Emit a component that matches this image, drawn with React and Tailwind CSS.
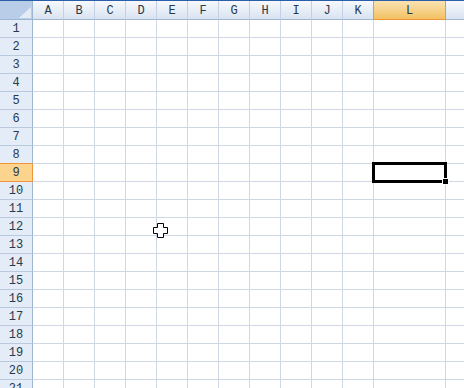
import React from 'react';

const COLS = [
  { name: 'A', w: 'w-[31px]' },
  { name: 'B', w: 'w-[31px]' },
  { name: 'C', w: 'w-[31px]' },
  { name: 'D', w: 'w-[31px]' },
  { name: 'E', w: 'w-[31px]' },
  { name: 'F', w: 'w-[31px]' },
  { name: 'G', w: 'w-[31px]' },
  { name: 'H', w: 'w-[31px]' },
  { name: 'I', w: 'w-[31px]' },
  { name: 'J', w: 'w-[31px]' },
  { name: 'K', w: 'w-[31px]' },
  { name: 'L', w: 'w-[72px]' },
  { name: 'M', w: 'w-[72px]' },
];

const ACTIVE_COL = 11;
const ACTIVE_ROW = 9;
const ROWS = Array.from({ length: 21 }, (_, i) => i + 1);

const Corner = () => (
  <div className="w-[33px] h-full shrink-0 border-r border-b border-[#9eb6ce] bg-[#b9cde9] relative">
    <svg className="absolute left-[19px] top-[6px]" width="12" height="11" viewBox="0 0 12 11">
      <path d="M12 0 L12 11 L0 11 Z" fill="#e3ebf6" />
    </svg>
  </div>
);

const ColHeader = ({ col, i }) => {
  const active = i === ACTIVE_COL;
  const beforeActive = i === ACTIVE_COL - 1;
  return (
    <div
      className={`${col.w} h-full shrink-0 flex items-center justify-center border-r border-b pt-[2px] ${
        active
          ? 'bg-gradient-to-b from-[#fae3b2] to-[#f2c161] border-[#f29536]'
          : beforeActive
          ? 'bg-gradient-to-b from-[#f6f9fd] to-[#d9e3f1] border-b-[#9eb6ce] border-r-[#f29536]'
          : 'bg-gradient-to-b from-[#f6f9fd] to-[#d9e3f1] border-b-[#9eb6ce] border-r-[#c3d1e3]'
      }`}
    >
      {col.name}
    </div>
  );
};

const RowHeader = ({ n }) => {
  const active = n === ACTIVE_ROW;
  const beforeActive = n === ACTIVE_ROW - 1;
  return (
    <div
      className={`w-[33px] h-full shrink-0 flex items-center justify-center border-r border-b pt-[1px] ${
        active
          ? 'bg-[#fcd48e] border-[#f29536]'
          : beforeActive
          ? 'bg-[#e4ecf7] border-r-[#9eb6ce] border-b-[#f29536]'
          : 'bg-[#e4ecf7] border-r-[#9eb6ce] border-b-[#b9c9de]'
      }`}
    >
      {n}
    </div>
  );
};

const Cell = ({ col, selected }) => (
  <div className={`${col.w} h-full shrink-0 border-r border-b border-[#d0d7e5] relative`}>
    {selected && (
      <>
        <div className="absolute left-[-2px] top-[-2px] w-[75px] h-[21px] border-[3px] border-black z-10" />
        <div className="absolute left-[68px] top-[14px] w-[7px] h-[7px] bg-white z-20 flex items-center justify-center">
          <div className="w-[5px] h-[5px] bg-black" />
        </div>
      </>
    )}
  </div>
);

const App = () => {
  return (
    <div className="w-[464px] h-[388px] overflow-hidden relative bg-white font-['Liberation_Mono',monospace] text-[12px] text-[#27394b]">
      <div className="h-[1px] bg-[#2a5ea8]" />
      <div className="flex h-[19px]">
        <Corner />
        {COLS.map((c, i) => (
          <ColHeader key={c.name} col={c} i={i} />
        ))}
      </div>
      {ROWS.map((n) => (
        <div key={n} className="flex h-[18px]">
          <RowHeader n={n} />
          {COLS.map((c, i) => (
            <Cell key={c.name} col={c} selected={n === ACTIVE_ROW && i === ACTIVE_COL} />
          ))}
        </div>
      ))}
      {/* cell cursor */}
      <svg className="absolute left-[153px] top-[223px] z-30" width="15" height="15" viewBox="0 0 15 15">
        <path d="M4.5 0.5h6v4h4v6h-4v4h-6v-4h-4v-6h4z" fill="#fff" stroke="#000" strokeWidth="1" />
      </svg>
    </div>
  );
};

export default App;
